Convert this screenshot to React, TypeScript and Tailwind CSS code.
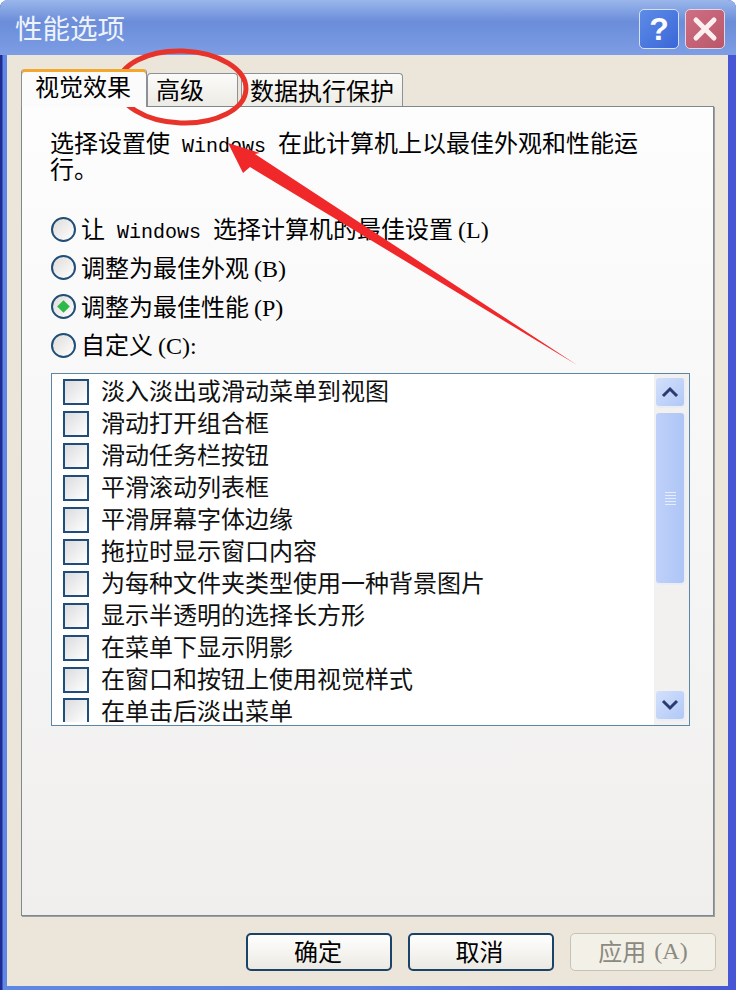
const cjk = { fontFamily: '"Noto Sans CJK SC", "Liberation Sans", sans-serif' };
const mono = { fontFamily: '"Liberation Mono", monospace' };
const serif = { fontFamily: '"Liberation Serif", serif' };

function Latin({ children, className }: { children: string; className?: string }) {
  return (
    <span className={`text-[20px] leading-[12px] ${className ?? ''}`} style={mono}>
      {children}
    </span>
  );
}

function Key({ children, className }: { children: string; className?: string }) {
  return (
    <span className={`text-[24px] leading-none ${className ?? ''}`} style={serif}>
      {children}
    </span>
  );
}

const options = [
  { id: 'auto', label: '让', win: true, rest: '选择计算机的最佳设置', key: '(L)', h: 'h-[38px]' },
  { id: 'look', label: '调整为最佳外观', key: '(B)', h: 'h-[39px]' },
  { id: 'perf', label: '调整为最佳性能', key: '(P)', checked: true, h: 'h-[39px]' },
  { id: 'custom', label: '自定义', key: '(C):', h: 'h-[38px]' },
];

const items = [
  '淡入淡出或滑动菜单到视图', '滑动打开组合框', '滑动任务栏按钮', '平滑滚动列表框', '平滑屏幕字体边缘',
  '拖拉时显示窗口内容', '为每种文件夹类型使用一种背景图片', '显示半透明的选择长方形', '在菜单下显示阴影',
  '在窗口和按钮上使用视觉样式',
];

function Radio({ checked }: { checked?: boolean }) {
  return (
    <span className="flex h-[25px] w-[25px] shrink-0 items-center justify-center rounded-full border-2 border-[#1f4e79] bg-gradient-to-br from-[#dfdcd8] to-white">
      {checked && <span className="h-[9px] w-[9px] rotate-45 bg-[#2fb84a]" />}
    </span>
  );
}

function ScrollBtn({ up }: { up?: boolean }) {
  return (
    <div className="flex h-[28px] w-[28px] items-center justify-center rounded-[3px] bg-gradient-to-br from-[#d3e0fb] to-[#b1c8f6] shadow-[1px_1px_0_1px_#e8edf6]">
      <svg width="18" height="12" viewBox="0 0 18 12" fill="none" stroke="#2b3a70" strokeWidth="3">
        <path d={up ? 'M2 10 L9 3 L16 10' : 'M2 2 L9 9 L16 2'} />
      </svg>
    </div>
  );
}

export default function App() {
  return (
    <div className="relative flex h-[990px] w-[736px] flex-col overflow-hidden rounded-t-[8px] bg-[linear-gradient(to_right,#1f2b90_2px,#5f88e6_3px,#5a7ee2_50%,#4656d6)]" style={cjk}>
      <div className="flex h-[55px] shrink-0 items-center justify-between bg-gradient-to-b from-[#9ab6ea] via-[#6b8dda] via-40% to-[#7d9de4] pl-[15px] pr-[11px]">
        <span className="text-[27.5px] leading-none text-[#eef3fb]">性能选项</span>
        <div className="flex gap-[6px] pt-[2px]">
          <div className="flex h-[40px] w-[40px] items-center justify-center rounded-[5px] border border-[#d5e0f5] bg-gradient-to-br from-[#5f8ce6] to-[#3a66d8] text-[32px] font-bold leading-none text-white" style={{ fontFamily: '"Liberation Sans", sans-serif' }}>?</div>
          <div className="flex h-[40px] w-[40px] items-center justify-center rounded-[5px] border border-[#e6d5dc] bg-gradient-to-br from-[#cf6f84] to-[#b9566a]">
            <svg width="26" height="26" viewBox="0 0 26 26" stroke="#fbeff0" strokeWidth="5" strokeLinecap="round">
              <path d="M4 4 L22 22 M22 4 L4 22" />
            </svg>
          </div>
        </div>
      </div>

      <div className="mb-[4px] ml-[7px] mr-[8px] flex min-h-0 flex-1 flex-col bg-[#ece5d9] pl-[14px] pr-[12px]">
        <div className="flex h-[51px] shrink-0 items-end">
          <div className="relative z-10 mb-[-1px] flex h-[38px] w-[126px] items-center justify-center rounded-t-[4px] border-x border-[#8b9196] bg-[#fbfbfb] pb-[4px] pr-[2px] text-[24px] leading-none text-black shadow-[inset_0_3px_0_#f2a72e]">视觉效果</div>
          <div className="flex h-[33px] w-[91px] items-center rounded-t-[4px] border border-b-0 border-[#8b9196] bg-gradient-to-b from-[#fbfbf9] to-[#ecebe4] pb-[2px] pl-[8px] text-[24px] leading-none text-black">高级</div>
          <div className="ml-[3px] flex h-[33px] w-[162px] items-center justify-center rounded-t-[4px] border border-b-0 border-[#8b9196] bg-gradient-to-b from-[#fbfbf9] to-[#ecebe4] pb-[1px] text-[24px] leading-none text-black">数据执行保护</div>
        </div>

        <div className="flex h-[810px] w-[693px] shrink-0 flex-col border border-[#7f898d] bg-gradient-to-b from-[#fdfdfe] to-[#f0efee] pl-[29px] pr-[22px] pt-[22px] shadow-[1px_1px_0_#9aa0a2]">
          <p className="-ml-[1px] text-[24px] leading-[26px] text-black">
            选择设置使<Latin className="mx-[12px]">Windows</Latin>在此计算机上以最佳外观和性能运<br />行。
          </p>
          <div className="mt-[29px] flex flex-col">
            {options.map((o) => (
              <div key={o.id} className={`flex items-center gap-[5px] text-[24px] leading-none text-black ${o.h}`}>
                <Radio checked={o.checked} />
                <span className="whitespace-nowrap">
                  {o.label}
                  {o.win && <Latin className="mx-[12px]">Windows</Latin>}
                  {o.rest}
                  <Key className="ml-[5px]">{o.key}</Key>
                </span>
              </div>
            ))}
          </div>
          <div className="mt-[9px] flex h-[353px] w-[639px] shrink-0 border border-[#5c86a6] bg-white">
            <div className="min-w-0 flex-1 pl-[11px] pt-[2px]">
              {items.map((t) => (
                <div key={t} className="flex h-[32px] items-center gap-[12px] text-[24px] leading-none text-[#111]">
                  <span className="h-[26px] w-[26px] shrink-0 border-2 border-[#1f4e79] bg-gradient-to-br from-[#dcdcdf] to-white" />
                  <span className="whitespace-nowrap pb-[4px]">{t}</span>
                </div>
              ))}
              <div className="flex h-[29px] items-start gap-[12px] text-[24px] leading-none text-[#111]">
                <span className="mt-[2px] h-[24px] w-[26px] shrink-0 border-2 border-b-0 border-[#1f4e79] bg-gradient-to-br from-[#dcdcdf] to-white" />
                <span className="whitespace-nowrap pt-[2px]">在单击后淡出菜单</span>
              </div>
            </div>
            <div className="flex w-[35px] shrink-0 flex-col items-center bg-[#f2f1ef] pr-[3px] pt-[4px]">
              <ScrollBtn up />
              <div className="mt-[7px] flex h-[170px] w-[28px] flex-col items-center justify-center gap-[2px] rounded-[3px] bg-gradient-to-r from-[#bfd1fa] to-[#aec5f5] shadow-[1px_1px_0_1px_#e8edf6]">
                {[0, 1, 2, 3, 4].map((i) => (
                  <span key={i} className="h-px w-[11px] bg-[#e6edfd]" />
                ))}
              </div>
              <div className="mb-[6px] mt-auto">
                <ScrollBtn />
              </div>
            </div>
          </div>
        </div>

        <div className="mt-[17px] flex justify-end gap-[16px] text-[24px] leading-none">
          <button className="flex h-[38px] w-[146px] items-center justify-center rounded-[5px] border-2 border-[#1c4268] bg-gradient-to-b from-white to-[#ebe9e2] pb-[3px] pr-[2px] text-black">确定</button>
          <button className="flex h-[38px] w-[146px] items-center justify-center rounded-[5px] border-2 border-[#1c4268] bg-gradient-to-b from-white to-[#ebe9e2] pb-[3px] pr-[3px] text-black">取消</button>
          <button className="flex h-[38px] w-[146px] items-center justify-center rounded-[5px] border border-[#c6c3b6] bg-[#f3f0e8] pb-[3px] text-[#8b8a80]">应用<Key className="ml-[8px]">(A)</Key></button>
        </div>
      </div>

      <svg className="pointer-events-none absolute inset-0" width="736" height="990" viewBox="0 0 736 990" fill="none">
        <ellipse cx="182" cy="87" rx="64" ry="36" stroke="#e8332a" strokeWidth="5" transform="rotate(2 182 87)" />
        <polygon points="228,143 260,153 255,154 577,365 250,167 243,173" fill="#f0282a" />
      </svg>
    </div>
  );
}
